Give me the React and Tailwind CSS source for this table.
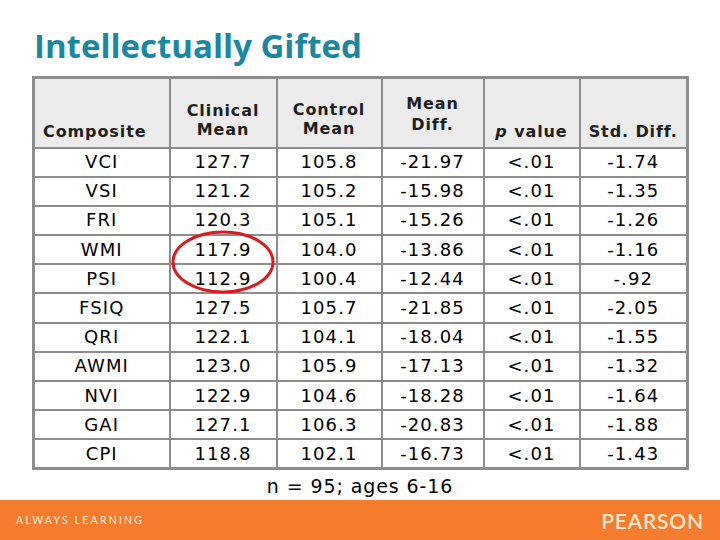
import React from "react";

const rows = [
  ["VCI", "127.7", "105.8", "-21.97", "<.01", "-1.74"],
  ["VSI", "121.2", "105.2", "-15.98", "<.01", "-1.35"],
  ["FRI", "120.3", "105.1", "-15.26", "<.01", "-1.26"],
  ["WMI", "117.9", "104.0", "-13.86", "<.01", "-1.16"],
  ["PSI", "112.9", "100.4", "-12.44", "<.01", "-.92"],
  ["FSIQ", "127.5", "105.7", "-21.85", "<.01", "-2.05"],
  ["QRI", "122.1", "104.1", "-18.04", "<.01", "-1.55"],
  ["AWMI", "123.0", "105.9", "-17.13", "<.01", "-1.32"],
  ["NVI", "122.9", "104.6", "-18.28", "<.01", "-1.64"],
  ["GAI", "127.1", "106.3", "-20.83", "<.01", "-1.88"],
  ["CPI", "118.8", "102.1", "-16.73", "<.01", "-1.43"],
];

export default function App() {
  return (
    <div className="relative w-[720px] h-[540px] bg-white overflow-hidden flex flex-col">
      <h1
        className="pl-[34px] pt-[26px] h-[76px] text-[33px] leading-[40px] font-bold text-[#1a88a1] tracking-[0px]"
        style={{ fontFamily: '"Open Sans", sans-serif' }}
      >
        Intellectually Gifted
      </h1>
      <div className="pl-[32px]">
        <table
          className="border-collapse border-[3px] border-[#8d8d8d] text-black"
          style={{ fontFamily: '"DejaVu Sans", Verdana, sans-serif' }}
        >
          <thead>
            <tr className="h-[70px] bg-[#ebebeb] text-[16px] leading-[19px] font-bold text-[#1e1e1e] tracking-[0.9px]">
              <th className="w-[136px] border-2 border-[#8d8d8d] align-bottom text-left pl-[8px] pb-[6px]">Composite</th>
              <th className="w-[107px] border-2 border-[#8d8d8d] align-bottom text-center pb-[8px]">Clinical<br />Mean</th>
              <th className="w-[105px] border-2 border-[#8d8d8d] align-bottom text-center pb-[9px]">Control<br />Mean</th>
              <th className="w-[102px] border-2 border-[#8d8d8d] align-bottom text-center pb-[12px] leading-[21px]">Mean<br />Diff.</th>
              <th className="w-[96px] border-2 border-[#8d8d8d] align-bottom text-center pb-[6px]"><i>p</i> value</th>
              <th className="w-[108px] border-2 border-[#8d8d8d] align-bottom text-center pb-[6px]">Std. Diff.</th>
            </tr>
          </thead>
          <tbody>
            {rows.map((r) => (
              <tr key={r[0]} className="h-[29.2px] text-[18px] tracking-[1.1px]">
                {r.map((c, i) => (
                  <td key={i} className="border-2 border-[#8d8d8d] text-center p-0 leading-[20px]">{c}</td>
                ))}
              </tr>
            ))}
          </tbody>
        </table>
      </div>
      <div
        className="text-center text-[19px] leading-[24px] pt-[4px] text-black tracking-[0.9px]"
        style={{ fontFamily: '"DejaVu Sans", Verdana, sans-serif' }}
      >
        n = 95; ages 6-16
      </div>
      <div className="mt-auto h-[40px] bg-[#f47c2c] flex items-center justify-between pl-[16px] pr-[16px]">
        <span
          className="text-[10.5px] tracking-[2.2px] text-[#fdf0e2] mt-[1px]"
          style={{ fontFamily: 'Lato, sans-serif' }}
        >
          ALWAYS LEARNING
        </span>
        <span
          className="text-[21px] font-semibold tracking-[0.8px] text-[#fbe8cf] mt-[2px]"
          style={{ fontFamily: 'Lato, sans-serif' }}
        >
          PEARSON
        </span>
      </div>
      <svg className="absolute left-[168px] top-[228px]" width="110" height="70" viewBox="0 0 110 70">
        <ellipse cx="55" cy="34" rx="50" ry="30" fill="none" stroke="#dd1920" strokeWidth="3" />
      </svg>
    </div>
  );
}
